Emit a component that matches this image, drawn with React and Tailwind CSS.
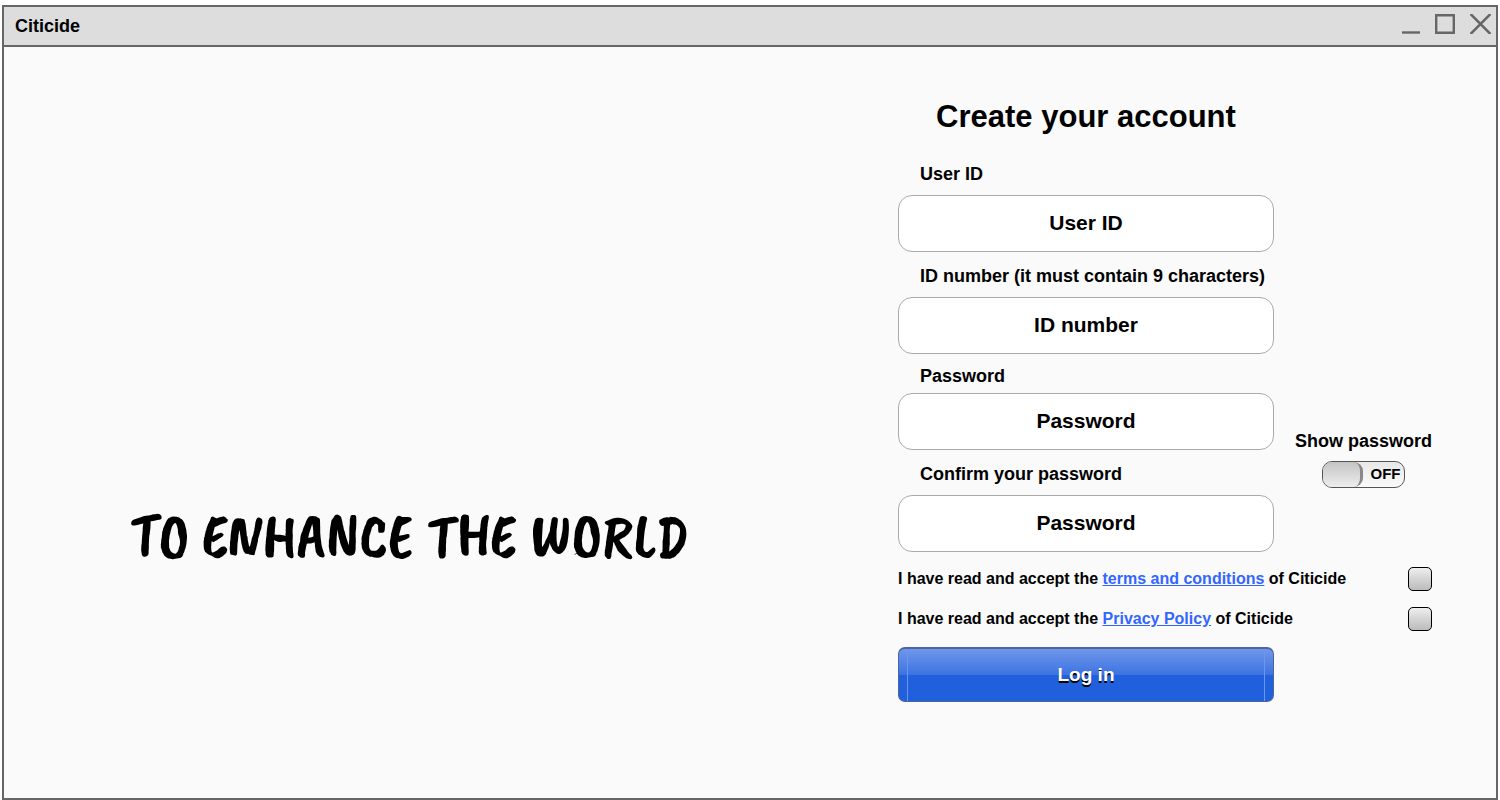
import { useState } from "react";

function TitleBar() {
  return (
    <header className="flex h-10 items-center justify-between border-b-2 border-[#666] bg-[#ddd] pr-[5px] pl-[11px]">
      <span className="text-[18px] leading-6">Citicide</span>
      <div className="flex gap-[15px] pb-1">
        <button type="button" aria-label="Minimize">
          <svg width="18" height="20" viewBox="0 0 18 20" className="block" stroke="#666" strokeWidth="2.4">
            <path d="M0 18.5H18" />
          </svg>
        </button>
        <button type="button" aria-label="Maximize">
          <svg width="20" height="20" viewBox="0 0 20 20" className="block" fill="none" stroke="#666" strokeWidth="2.4">
            <path d="M1.2 1.2H18.8V18.8H1.2Z" />
          </svg>
        </button>
        <button type="button" aria-label="Close">
          <svg width="21" height="20" viewBox="0 0 21 20" className="block" stroke="#666" strokeWidth="2.6">
            <path d="M0.5 0L20.5 20M20.5 0L0.5 20" />
          </svg>
        </button>
      </div>
    </header>
  );
}

function Field({ id, label, placeholder = label, type = "text", className = "gap-[9px]" }) {
  return (
    <div className={"flex flex-col " + className}>
      <label htmlFor={id} className="pl-[22px] text-[18px] leading-6">
        {label}
      </label>
      <input
        id={id}
        type={type}
        placeholder={placeholder}
        className="h-[57px] w-full rounded-[14px] border border-[#aaa] bg-white px-4 pb-0.5 text-center text-[21px] font-bold text-black placeholder:text-black placeholder:opacity-100"
      />
    </div>
  );
}

function Consent({ id, link }) {
  return (
    <div className="flex h-6 items-center justify-between">
      <label htmlFor={id} className="text-[16px] leading-6">
        I have read and accept the{" "}
        <a href="#" className="text-[#3366ff] underline">
          {link}
        </a>{" "}
        of Citicide
      </label>
      <input
        id={id}
        type="checkbox"
        className="size-6 appearance-none rounded-[5px] border border-black bg-linear-to-b from-[#eee] to-[#bbb] checked:from-[#6c97ea] checked:to-[#2260dd]"
      />
    </div>
  );
}

export default function App() {
  const [shown, setShown] = useState(false);
  const passwordType = shown ? "text" : "password";

  return (
    <div className="flex min-h-screen bg-white px-0.5 pt-[5px] font-['Liberation_Sans',Arial,sans-serif] font-bold text-black">
      <div className="flex flex-1 flex-col border-2 border-[#666] bg-[#fafafa]">
        <TitleBar />
        <main className="flex flex-1 items-start justify-between pr-16 pl-[126px]">
          <p className="pt-[460px] font-['Caveat_Brush','Liberation_Sans_Narrow','Liberation_Sans',sans-serif] text-[63px] leading-[60px] font-normal whitespace-nowrap">
            TO ENHANCE THE WORLD
          </p>
          <form className="w-[534px] pt-[50px]" onSubmit={(e) => e.preventDefault()}>
            <div className="flex w-[376px] flex-col gap-3">
              <h1 className="mb-[13px] text-center text-[31px] leading-10">Create your account</h1>
              <Field id="user" label="User ID" />
              <Field id="number" label="ID number (it must contain 9 characters)" placeholder="ID number" />
            </div>
            <div className="mt-[10px] flex items-center justify-between">
              <div className="flex w-[376px] flex-col gap-3">
                <Field id="password" label="Password" type={passwordType} className="gap-[5px]" />
                <Field id="confirm" label="Confirm your password" placeholder="Password" type={passwordType} />
              </div>
              <div className="flex flex-col items-center gap-2">
                <span id="show-label" className="text-[18px] leading-6">
                  Show password
                </span>
                <button
                  type="button"
                  role="switch"
                  aria-checked={shown}
                  aria-labelledby="show-label"
                  onClick={() => setShown(!shown)}
                  className="flex h-[27px] w-[83px] items-stretch rounded-[10px] border border-[#555] bg-linear-to-b from-[#e8e8e8] to-[#fafafa]"
                >
                  <span className="w-10 rounded-[9px] border-r-3 border-[#888] bg-linear-to-b from-[#c4c4c4] to-[#eee]" />
                  <span className="flex-1 self-center pl-1 text-[15px] leading-6">{shown ? "ON" : "OFF"}</span>
                </button>
              </div>
            </div>
            <div className="mt-[15px] flex flex-col gap-4">
              <Consent id="terms" link="terms and conditions" />
              <Consent id="privacy" link="Privacy Policy" />
              <button
                type="submit"
                className="flex h-[55px] w-[376px] rounded-[7px] border border-t-2 border-[#4a659f] bg-linear-to-b from-[#6f97ea] from-0% via-[#3c72e1] via-50% to-[#2160dd] to-50% px-2"
              >
                <span className="flex h-full flex-1 items-center justify-center border-x border-[#6d96ea] text-[19px] text-white [text-shadow:0_2px_0_#000]">
                  Log in
                </span>
              </button>
            </div>
          </form>
        </main>
      </div>
    </div>
  );
}
